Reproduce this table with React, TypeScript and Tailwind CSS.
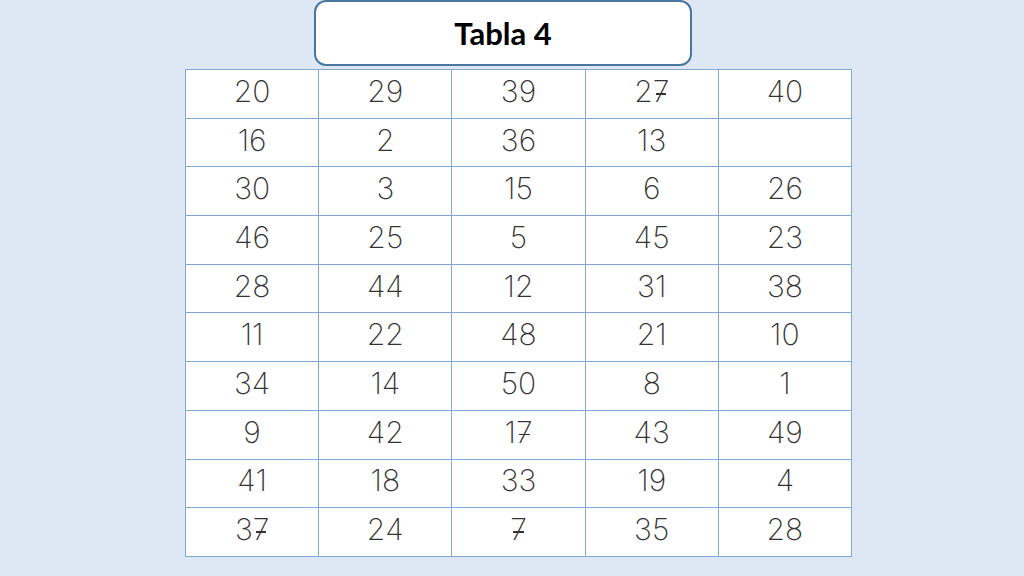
const rows = [
  ['20', '29', '39', '27', '40'],
  ['16', '2', '36', '13', ''],
  ['30', '3', '15', '6', '26'],
  ['46', '25', '5', '45', '23'],
  ['28', '44', '12', '31', '38'],
  ['11', '22', '48', '21', '10'],
  ['34', '14', '50', '8', '1'],
  ['9', '42', '17', '43', '49'],
  ['41', '18', '33', '19', '4'],
  ['37', '24', '7', '35', '28'],
];

// school-style 7 with a small bar through the stem
const Digit = ({ ch }: { ch: string }) =>
  ch === '7' ? (
    <span className="relative inline-block">
      7
      <span className="absolute left-[3px] right-[3px] top-[54%] h-[1.5px] bg-[#333]" />
    </span>
  ) : (
    <span>{ch}</span>
  );

export default function App() {
  return (
    <div className="w-[1024px] h-[576px] bg-[#dee8f4] overflow-hidden">
      <div className="pl-[314px]">
        <div className="w-[378px] h-[66px] bg-white border-[2.5px] border-[#4a76a0] rounded-[12px] flex items-center justify-center">
          <span className="font-['Lato',sans-serif] font-bold text-[31px] text-black">Tabla 4</span>
        </div>
      </div>
      <div className="pl-[185px] pt-[3px]">
        <div className="w-[667px] grid grid-cols-5 border-t border-l border-[#80a8d4] bg-white">
          {rows.flat().map((n, i) => (
            <div
              key={i}
              className="h-[48.7px] pb-[5px] border-r border-b border-[#80a8d4] flex items-center justify-center font-['Inter',sans-serif] font-extralight text-[30px] text-[#333]"
            >
              {n.split('').map((c, j) => (
                <Digit key={j} ch={c} />
              ))}
            </div>
          ))}
        </div>
      </div>
    </div>
  );
}
